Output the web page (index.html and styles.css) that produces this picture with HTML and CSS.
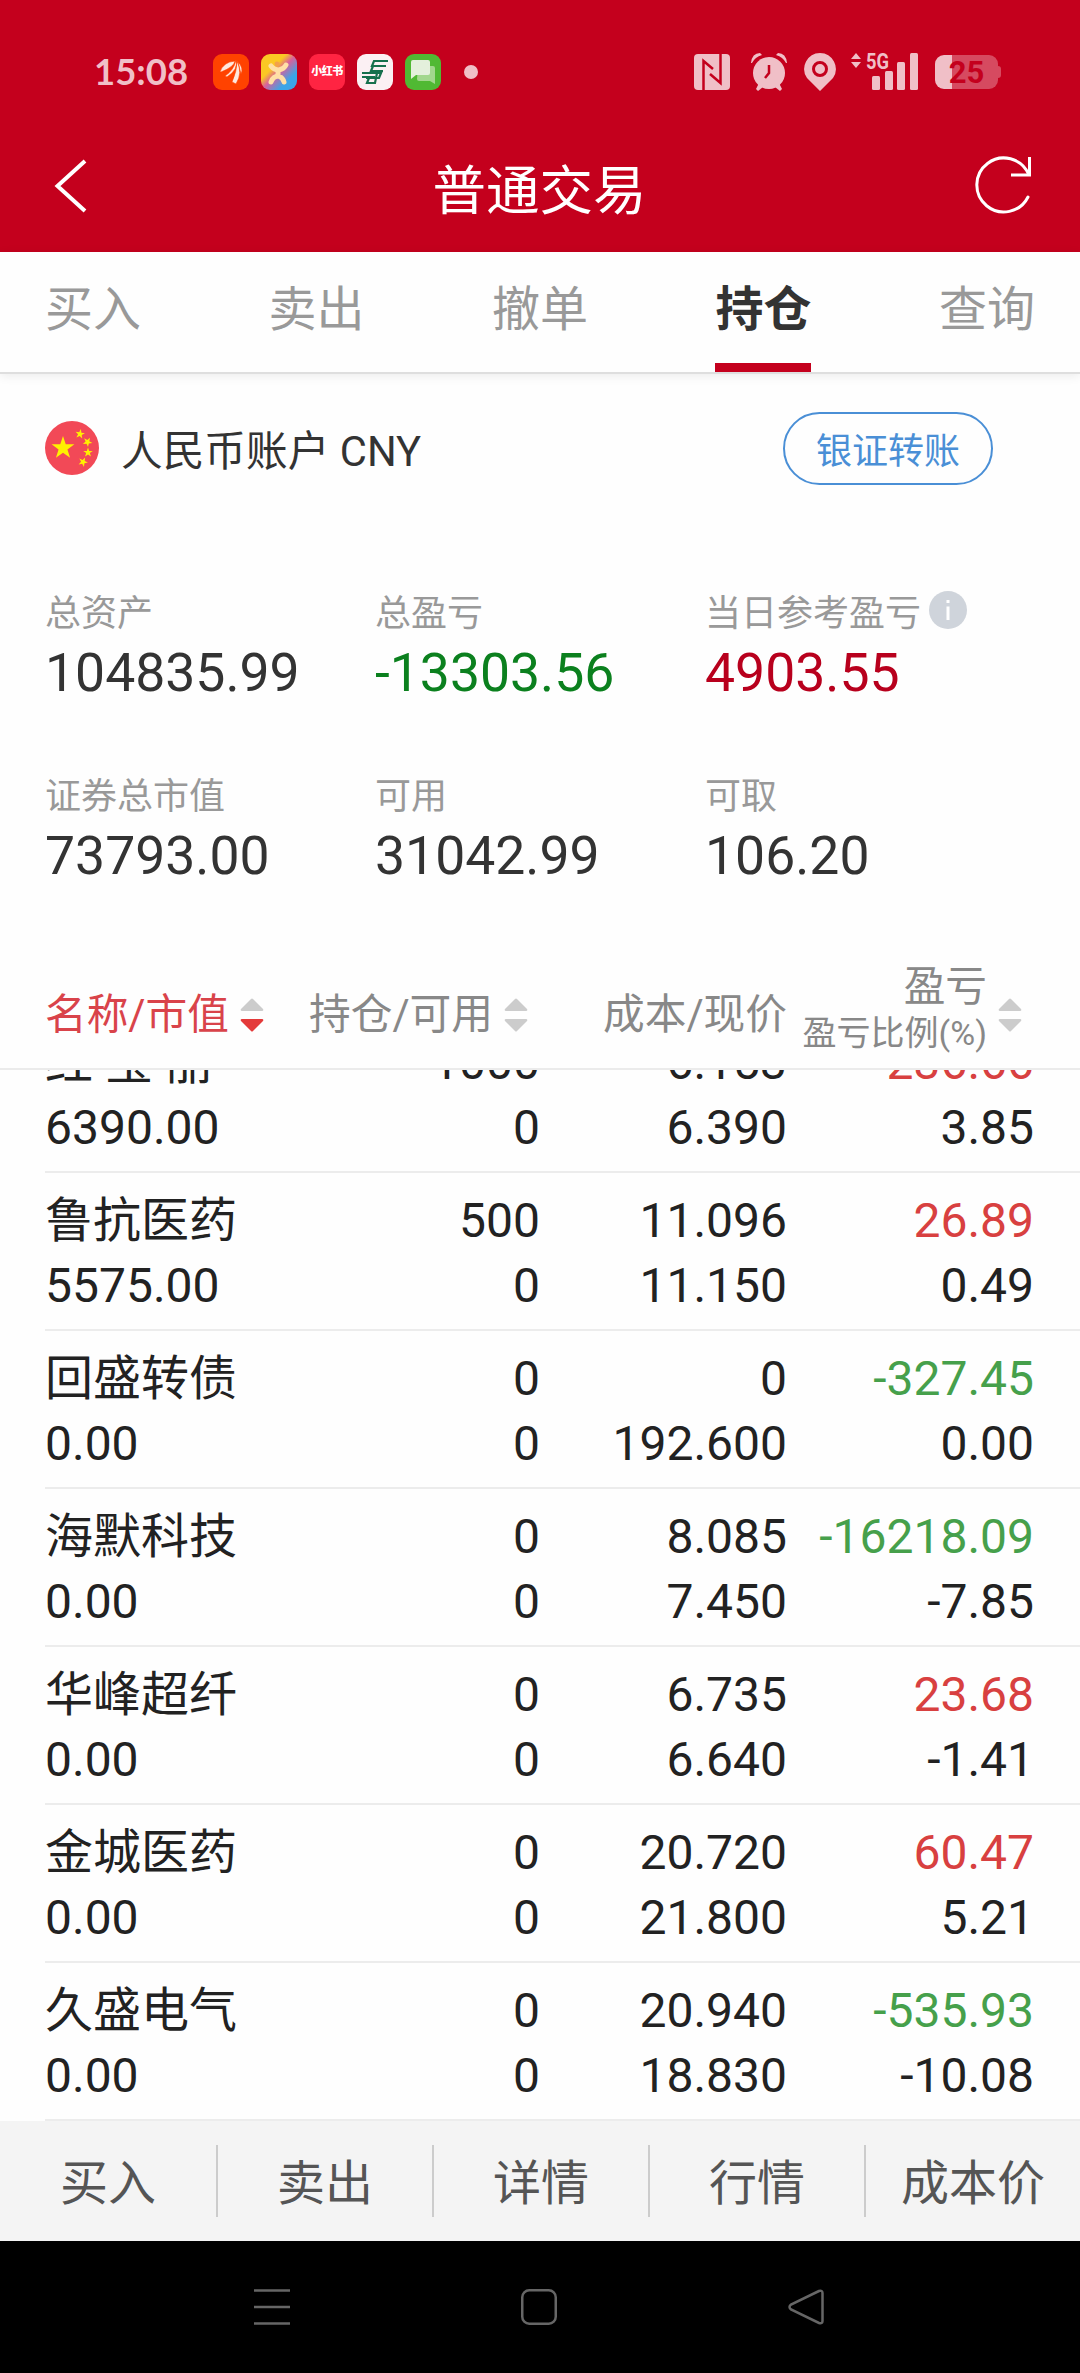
FILE: index.html
```html
<!DOCTYPE html>
<html lang="zh-CN">
<head>
    <meta charset="UTF-8">
    <meta name="viewport" content="width=device-width, initial-scale=1.0">
    <title>普通交易</title>
    <link rel="stylesheet" href="styles.css">
</head>
<body>
    <header class="header">
        <div class="status-bar">
            <span class="time">15:08</span>
            <div class="apps">
                <svg width="36" height="36" viewBox="0 0 36 36">
                    <rect width="36" height="36" rx="9" fill="#ff4200"/>
                    <path d="M7 18 Q10 8 22 7 Q21 13 8 18Z M12 22 Q21 16 23 6 Q26 15 14 23Z M19 28 Q24 17 24 7 Q30 19 23 30Z M25 8 Q31 14 28 20Z" fill="#ffe9dd" stroke="#ff4200" stroke-width="0.6"/>
                </svg>
                <svg width="36" height="36" viewBox="0 0 36 36">
                    <defs>
                        <linearGradient id="rainbow" x1="0" y1="0" x2="1" y2="1">
                            <stop offset="0.35" stop-color="#fbc824"/>
                            <stop offset="0.5" stop-color="#d9609a"/>
                            <stop offset="0.75" stop-color="#3ba5e8"/>
                        </linearGradient>
                    </defs>
                    <rect width="36" height="36" rx="9" fill="url(#rainbow)"/>
                    <circle cx="16" cy="10" r="2.500" fill="#f3a14b"/>
                    <path d="M10 12 Q13 16 18 16 Q23 15 25 11 M10 28 Q12 22 18 22 Q22 24 23 28 M17 16 V22" fill="none" stroke="#ffe0a6" stroke-width="5" stroke-linecap="round"/>
                </svg>
                <span class="app-red">小红书</span>
                <svg width="36" height="36" viewBox="0 0 36 36">
                    <rect width="36" height="36" rx="9" fill="#fbf0f3"/>
                    <path d="M31 7 H17 L15 12 H29 M29 12 H16 L14 17 H26 M5 19 H24 L22 24 H9 M20 19 L18 29 H10 L12 24 M5 23 H18" fill="none" stroke="#16704d" stroke-width="2.2"/>
                </svg>
                <svg width="36" height="36" viewBox="0 0 36 36">
                    <rect width="36" height="36" rx="9" fill="#50b933"/>
                    <path d="M13 12 H28 Q30 12 30 14 V30 L25 27 H14 Q12 27 12 25Z" fill="#a2d78d"/>
                    <path d="M8 6 H23 Q25 6 25 8 V19 Q25 21 23 21 H11 L6 25 V8 Q6 6 8 6Z" fill="#e4f0dc"/>
                </svg>
            </div>
            <i class="dot"></i>
            <div class="signals">
                <svg width="36" height="36" viewBox="0 0 36 36">
                    <rect width="36" height="36" rx="4" fill="#f0bfc7"/>
                    <path d="M9.500 36 V7 L19 15 M26.500 0 V29 L16 20" fill="none" stroke="#c4001d" stroke-width="2.500"/>
                </svg>
                <svg width="38" height="38" viewBox="0 0 38 38">
                    <circle cx="19" cy="20" r="16" fill="#f0bfc7"/>
                    <path d="M1 10 Q2 0 10 0 L12 2 Q5 4 2 10Z M37 10 Q36 0 28 0 L26 2 Q33 4 36 10Z M6 36 L9 30 L13 34 L8 38Z M32 36 L29 30 L25 34 L30 38Z" fill="#f0bfc7"/>
                    <path d="M19 12 V20 L15 25" fill="none" stroke="#c4001d" stroke-width="2.500"/>
                </svg>
                <svg width="32" height="38" viewBox="0 0 32 38">
                    <path d="M16 0 A16 16 0 0 1 29 25 L16 38 L3 25 A16 16 0 0 1 16 0Z" fill="#f0bfc7"/>
                    <circle cx="16" cy="16" r="6.500" fill="none" stroke="#c4001d" stroke-width="3"/>
                </svg>
                <svg class="network" width="68" height="38" viewBox="0 0 68 38">
                    <path d="M0 6 L5 0 L10 6Z M0 9 L5 15 L10 9Z" fill="#f0bfc7"/>
                    <text x="15" y="16" textLength="23" lengthAdjust="spacingAndGlyphs">5G</text>
                    <rect x="21" y="23" width="8" height="14" rx="1.500" fill="#f0bfc7"/>
                    <rect x="34" y="18" width="8" height="19" rx="1.500" fill="#f0bfc7"/>
                    <rect x="46" y="9" width="8" height="28" rx="1.500" fill="#f0bfc7"/>
                    <rect x="59" y="0" width="8" height="37" rx="1.500" fill="#f0bfc7"/>
                </svg>
                <div class="battery"><span>25</span></div>
            </div>
        </div>
        <div class="title-bar">
            <svg width="34" height="54" viewBox="0 0 34 54">
                <path d="M31 2 L3.500 27 L31 52" fill="none" stroke="#fff" stroke-width="4"/>
            </svg>
            <h1>普通交易</h1>
            <svg width="58" height="60" viewBox="0 0 58 60">
                <path d="M53 41 A27 27 0 1 1 53.500 18" fill="none" stroke="#fff" stroke-width="3" stroke-linecap="round"/>
                <path d="M54.500 1 V19 H36" fill="none" stroke="#fff" stroke-width="3"/>
            </svg>
        </div>
    </header>

    <nav class="tabs">
        <a>买入</a>
        <a>卖出</a>
        <a>撤单</a>
        <a class="active">持仓</a>
        <a>查询</a>
    </nav>

    <section class="account">
        <svg width="54" height="54" viewBox="0 0 54 54">
            <defs>
                <polygon id="star" points="0,-10 2.3,-3.1 9.5,-3.1 3.7,1.2 5.9,8.1 0,3.9 -5.900,8.1 -3.700,1.2 -9.500,-3.1 -2.300,-3.1"/>
            </defs>
            <circle cx="27" cy="27" r="27" fill="#f24957"/>
            <g fill="#fff100">
                <use href="#star" transform="translate(18 27) scale(1.2)"/>
                <use href="#star" transform="translate(35 13) rotate(10) scale(0.5)"/>
                <use href="#star" transform="translate(42.500 21) rotate(30) scale(0.5)"/>
                <use href="#star" transform="translate(43 31.500) scale(0.5)"/>
                <use href="#star" transform="translate(38 41) rotate(25) scale(0.5)"/>
            </g>
        </svg>
        <span class="account-name">人民币账户 CNY</span>
        <button type="button" class="transfer">银证转账</button>
    </section>

    <section class="summary">
        <div class="item">
            <label>总资产</label>
            <p>104835.99</p>
        </div>
        <div class="item">
            <label>总盈亏</label>
            <p class="loss">-13303.56</p>
        </div>
        <div class="item">
            <label>当日参考盈亏
                <svg width="38" height="38" viewBox="0 0 38 38">
                    <circle cx="19" cy="19" r="19" fill="#cfd4db"/>
                    <path d="M19 9 V12 M19 15.500 V29" stroke="#fff" stroke-width="3"/>
                </svg>
            </label>
            <p class="gain">4903.55</p>
        </div>
        <div class="item">
            <label>证券总市值</label>
            <p>73793.00</p>
        </div>
        <div class="item">
            <label>可用</label>
            <p>31042.99</p>
        </div>
        <div class="item">
            <label>可取</label>
            <p>106.20</p>
        </div>
    </section>

    <div class="list-head">
        <div class="col sorted">名称/市值
            <svg class="sort" viewBox="0 0 24 34"><path class="up" d="M1 11 L11 1 Q12 0 13 1 L23 11 Q24 13 22 13 H2 Q0 13 1 11Z"/><path class="down" d="M1 23 L11 33 Q12 34 13 33 L23 23 Q24 21 22 21 H2 Q0 21 1 23Z"/></svg>
        </div>
        <div class="col">持仓/可用
            <svg class="sort" viewBox="0 0 24 34"><path d="M1 11 L11 1 Q12 0 13 1 L23 11 Q24 13 22 13 H2 Q0 13 1 11Z"/><path d="M1 23 L11 33 Q12 34 13 33 L23 23 Q24 21 22 21 H2 Q0 21 1 23Z"/></svg>
        </div>
        <div class="col">成本/现价</div>
        <div class="col">
            <div class="two-lines">盈亏<small>盈亏比例(%)</small></div>
            <svg class="sort" viewBox="0 0 24 34"><path d="M1 11 L11 1 Q12 0 13 1 L23 11 Q24 13 22 13 H2 Q0 13 1 11Z"/><path d="M1 23 L11 33 Q12 34 13 33 L23 23 Q24 21 22 21 H2 Q0 21 1 23Z"/></svg>
        </div>
    </div>

    <main class="list">
        <div class="row scrolled">
            <span>红 宝 丽</span><span>1000</span><span>6.153</span><span class="up">236.66</span>
            <span>6390.00</span><span>0</span><span>6.390</span><span>3.85</span>
        </div>
        <div class="row">
            <span>鲁抗医药</span><span>500</span><span>11.096</span><span class="up">26.89</span>
            <span>5575.00</span><span>0</span><span>11.150</span><span>0.49</span>
        </div>
        <div class="row">
            <span>回盛转债</span><span>0</span><span>0</span><span class="down">-327.45</span>
            <span>0.00</span><span>0</span><span>192.600</span><span>0.00</span>
        </div>
        <div class="row">
            <span>海默科技</span><span>0</span><span>8.085</span><span class="down">-16218.09</span>
            <span>0.00</span><span>0</span><span>7.450</span><span>-7.85</span>
        </div>
        <div class="row">
            <span>华峰超纤</span><span>0</span><span>6.735</span><span class="up">23.68</span>
            <span>0.00</span><span>0</span><span>6.640</span><span>-1.41</span>
        </div>
        <div class="row">
            <span>金城医药</span><span>0</span><span>20.720</span><span class="up">60.47</span>
            <span>0.00</span><span>0</span><span>21.800</span><span>5.21</span>
        </div>
        <div class="row">
            <span>久盛电气</span><span>0</span><span>20.940</span><span class="down">-535.93</span>
            <span>0.00</span><span>0</span><span>18.830</span><span>-10.08</span>
        </div>
    </main>

    <footer class="actions">
        <a>买入</a>
        <a>卖出</a>
        <a>详情</a>
        <a>行情</a>
        <a>成本价</a>
    </footer>

    <div class="system-nav">
        <svg width="36" height="36" viewBox="0 0 36 36"><path d="M0 1.500 H36 M0 18 H36 M0 34.500 H36"/></svg>
        <svg width="36" height="36" viewBox="0 0 36 36"><rect x="1.250" y="1.250" width="33.500" height="33.500" rx="7"/></svg>
        <svg width="36" height="36" viewBox="0 0 36 36"><path d="M31 2 L3 15.500 Q0 18 3 20.500 L31 34 Q34.500 35 34.500 32 V4 Q34.500 1 31 2Z"/></svg>
    </div>
</body>
</html>
```

FILE: styles.css
```css
* {
    box-sizing: border-box;
}
body {
    margin: 0;
    width: 1080px;
    height: 2373px;
    overflow: hidden;
    background: #fefefe;
    color: #222;
    font-family: Roboto, "Noto Sans CJK SC", sans-serif;
    display: flex;
    flex-direction: column;
}
svg {
    display: block;
    flex: none;
}

/* header */
.header {
    height: 252px;
    background: #c4001d;
}
.status-bar {
    height: 124px;
    padding: 20px 82px 0 94px;
    display: flex;
    align-items: center;
}
.time {
    width: 119px;
    color: #f0bfc7;
    font-family: Lato, sans-serif;
    font-size: 36.500px;
    font-weight: bold;
    line-height: 34px;
    padding-bottom: 2px;
}
.apps {
    display: flex;
    gap: 12px;
}
.app-red {
    width: 36px;
    height: 36px;
    border-radius: 9px;
    background: #ff2442;
    color: #fff;
    font-size: 11px;
    font-weight: 900;
    letter-spacing: -0.5px;
    line-height: 36px;
    text-align: center;
    white-space: nowrap;
}
.dot {
    width: 14px;
    height: 14px;
    margin-left: 23px;
    border-radius: 50%;
    background: #f0bfc7;
}
.signals {
    margin-left: auto;
    display: flex;
    align-items: center;
}
.signals svg:nth-child(1) {
    margin-right: 20px;
}
.signals svg:nth-child(2) {
    margin-right: 16px;
}
.network {
    margin: 0 16px 0 15px;
    overflow: visible;
}
.network text {
    fill: #f0bfc7;
    font-size: 22px;
    font-weight: bold;
}
.battery {
    width: 63px;
    height: 34px;
    border-radius: 9px;
    background: linear-gradient(to right, #f0bfc7 17px, #d64a60 17px);
    color: #c4001d;
    font-size: 31px;
    font-weight: bold;
    line-height: 35px;
    text-align: center;
    position: relative;
}
.battery::after {
    content: "";
    position: absolute;
    left: 63px;
    top: 11px;
    width: 3px;
    height: 12px;
    border-radius: 0 3px 3px 0;
    background: #d64a60;
}
.title-bar {
    height: 124px;
    padding: 0 47px 0 54px;
    display: flex;
    align-items: center;
    justify-content: space-between;
}
.title-bar h1 {
    margin: 0 0 0 16px;
    color: #fff;
    font-size: 53.500px;
    font-weight: normal;
}

/* tabs */
.tabs {
    height: 122px;
    padding: 0 45px;
    border-bottom: 2px solid #dedede;
    box-shadow: 0 2px 10px rgba(0, 0, 0, 0.08);
    display: flex;
    justify-content: space-between;
}
.tabs a {
    height: 120px;
    color: #999;
    font-size: 48px;
    line-height: 116px;
}
.tabs .active {
    color: #333;
    font-weight: bold;
    border-bottom: 9px solid #c4001d;
}

/* account */
.account {
    height: 148px;
    padding: 0 87px 0 45px;
    display: flex;
    align-items: center;
}
.account-name {
    margin-left: 22px;
    color: #333;
    font-size: 41.700px;
}
.transfer {
    width: 210px;
    height: 73px;
    margin-left: auto;
    padding: 0;
    border: 2px solid #4a8fd6;
    border-radius: 37px;
    background: none;
    color: #4a8fd6;
    font: inherit;
    font-size: 36px;
}

/* summary */
.summary {
    height: 414px;
    padding: 61px 0 0 45px;
    display: grid;
    grid-template-columns: repeat(3, 330px);
    grid-auto-rows: 183px;
}
.summary label {
    display: flex;
    align-items: center;
    gap: 8px;
    height: 54px;
    color: #999;
    font-size: 36px;
}
.summary p {
    margin: 3px 0 0;
    color: #333;
    font-size: 53.500px;
    line-height: 66px;
}
.summary .loss {
    color: #0b801e;
}
.summary .gain {
    color: #b8001d;
}

/* holdings */
.list-head,
.row {
    display: grid;
    grid-template-columns: 265px 230px 247px 247px;
    padding-left: 45px;
}
.list-head {
    height: 134px;
    padding-top: 25px;
    border-bottom: 2px solid #ebebeb;
    color: #888;
    font-size: 41.700px;
}
.col {
    display: flex;
    align-items: center;
    justify-content: flex-end;
    gap: 11px;
    line-height: 48px;
    white-space: nowrap;
}
.sorted {
    justify-content: flex-start;
    color: #d9434a;
}
.col:nth-child(2) {
    margin-right: 12px;
}
.col:nth-child(4) {
    margin-right: 12px;
}
.two-lines {
    padding-bottom: 12px;
    text-align: right;
}
.two-lines small {
    display: block;
    font-size: 34px;
    line-height: 44px;
}
.sort {
    width: 24px;
    height: 34px;
    fill: #ccc;
}
.sorted .down {
    fill: #e43a3a;
}
.list {
    height: 1051px;
    overflow: hidden;
}
.row {
    height: 158px;
    margin-left: 45px;
    padding: 15px 0 0;
    border-bottom: 2px solid #ececec;
    grid-auto-rows: 65px;
    font-size: 48px;
    line-height: 65px;
}
.scrolled {
    margin-top: -55px;
}
.row span {
    text-align: right;
    white-space: nowrap;
}
.row span:nth-child(4n + 1) {
    text-align: left;
}
.row .up {
    color: #d84040;
}
.row .down {
    color: #46a04b;
}

/* bottom */
.actions {
    height: 120px;
    padding: 24px 0;
    background: #f4f4f4;
    display: grid;
    grid-template-columns: repeat(5, 1fr);
}
.actions a {
    height: 72px;
    color: #555;
    font-size: 48px;
    line-height: 77px;
    text-align: center;
}
.actions a + a {
    border-left: 2px solid #ccc;
}
.system-nav {
    flex: 1;
    padding: 0 256px 0 254px;
    background: #000;
    display: flex;
    align-items: center;
    justify-content: space-between;
}
.system-nav svg {
    fill: none;
    stroke: #666;
    stroke-width: 2.500px;
}
```
